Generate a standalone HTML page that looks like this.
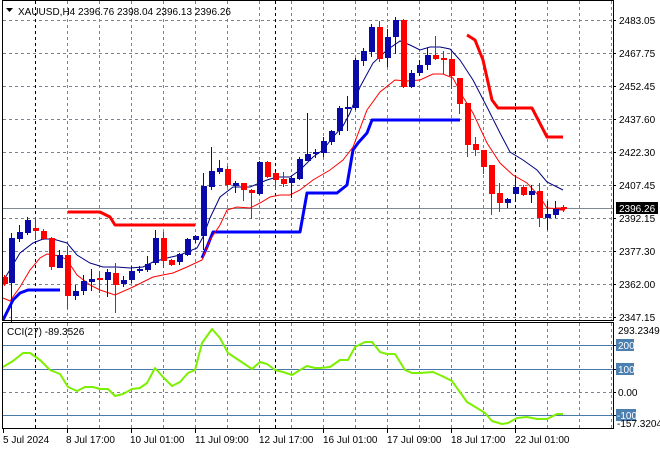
<!DOCTYPE html>
<html><head><meta charset="utf-8"><style>
html,body{margin:0;padding:0;background:#fff;}
svg{display:block;font-family:"Liberation Sans",sans-serif;font-size:10px;}
</style></head><body>
<svg width="660" height="450" viewBox="0 0 660 450" xmlns="http://www.w3.org/2000/svg">
<rect width="660" height="450" fill="#fff"/>
<!-- grid main -->
<g stroke="#7a8290" stroke-width="1" stroke-dasharray="3,3" fill="none">
<path d="M3 20.5H613M3 53.5H613M3 86.5H613M3 119.5H613M3 152.5H613M3 185.5H613M3 218.5H613M3 251.5H613M3 284.5H613M3 317.5H613"/>
<path d="M67.5 1V320M99.5 1V320M131.5 1V320M163.5 1V320M195.5 1V320M227.5 1V320M259.5 1V320M291.5 1V320M323.5 1V320M355.5 1V320M387.5 1V320M419.5 1V320M451.5 1V320M483.5 1V320M547.5 1V320M579.5 1V320M611.5 1V320"/>
<path d="M3 392.5H613"/>
<path d="M67.5 323V429M99.5 323V429M131.5 323V429M163.5 323V429M195.5 323V429M227.5 323V429M259.5 323V429M291.5 323V429M323.5 323V429M355.5 323V429M387.5 323V429M419.5 323V429M451.5 323V429M483.5 323V429M547.5 323V429M579.5 323V429M611.5 323V429"/>
</g>
<g stroke="#000" stroke-width="1" stroke-dasharray="3,3">
<path d="M35.5 1V320M275.5 1V320M515.5 1V320M35.5 323V429M275.5 323V429M515.5 323V429"/>
</g>
<!-- current price line -->
<path d="M3 208.5H613" stroke="#808890" stroke-width="1"/>
<!-- CCI levels -->
<path d="M3 345.5H613M3 369.5H613M3 415.5H613" stroke="#4a78a8" stroke-width="1"/>

<!-- thick step lines -->
<g fill="none" stroke-width="3" stroke-linejoin="round">
<polyline stroke="#ff0000" points="68,212 100,212 110,217 115,225 195,225"/>
<polyline stroke="#ff0000" points="467,35 475,40 483,60 492,100 498,108 532,108 547,137 563,137"/>
<polyline stroke="#ff0000" points="555,209 565,209"/>
<polyline stroke="#0000ff" points="3,320 13,300 20,293 28,290 60,290"/>
<polyline stroke="#0000ff" points="202,258 207,247 213,232 300,232 307,193 337,193 347,185 353,150 358,143 367,133 372,120 460,120"/>
</g>
<!-- MAs -->
<polyline fill="none" stroke="#000080" stroke-width="1" points="5,278 20,253 33,243 43,239 53,239 67,243 77,255 90,263 103,267 117,267 130,268 143,267 153,262 167,258 180,255 197,248 203,237 210,218 220,197 233,187 250,187 267,180 277,177 290,177 300,170 313,157 323,150 333,137 343,126 350,113 360,87 373,63 387,50 400,41 410,45 420,50 430,47 440,47 450,49 460,60 473,80 487,107 500,133 510,152 523,160 537,170 547,182 563,190"/>
<polyline fill="none" stroke="#ff0000" stroke-width="1" points="3,298 10,301 20,287 30,270 40,258 47,254 60,256 67,260 77,275 90,285 100,290 115,295 133,287 153,277 173,273 187,267 202,260 210,240 220,225 227,210 237,207 250,208 260,203 270,197 280,195 290,195 300,190 313,180 330,170 343,160 353,147 367,110 380,92 395,80 407,81 420,80 433,74 443,74 453,78 463,97 473,113 487,143 500,163 513,175 527,183 540,197 547,208 563,209"/>

<!-- blue candles -->
<g stroke="#0000c8" stroke-width="1">
<path d="M11.5 233V322M19.5 225V242M27.5 217V235M59.5 250V268M75.5 285V300M83.5 275V295M91.5 269V291M107.5 269V297M123.5 276V287M131.5 266V283M139.5 266V273M147.5 256V272M155.5 230V265M179.5 253V265M187.5 238V256M195.5 235V243M203.5 173V250M211.5 147V190M219.5 160V174M235.5 181V193M259.5 161V195M291.5 176V198M299.5 157V180M307.5 113V160M315.5 149V158M323.5 137V157M331.5 130V145M339.5 106V135M347.5 96V131M355.5 58V110M363.5 48V66M371.5 24V57M387.5 29V67M395.5 17V54M411.5 70V88M419.5 60V76M427.5 48V70M507.5 198V208M515.5 175V200M531.5 185V203M547.5 201V230M555.5 201V218"/>
</g>
<g fill="#0a0aa8">
<rect x="9" y="238" width="6" height="45"/><rect x="17" y="232" width="6" height="7"/><rect x="25" y="220" width="6" height="13"/><rect x="57" y="255" width="6" height="13"/><rect x="73" y="291" width="6" height="5"/><rect x="81" y="281" width="6" height="10"/><rect x="89" y="279" width="6" height="3"/><rect x="105" y="272" width="6" height="8"/><rect x="121" y="280" width="6" height="4"/><rect x="129" y="271" width="6" height="9"/><rect x="137" y="269" width="6" height="2"/><rect x="145" y="264" width="6" height="6"/><rect x="153" y="238" width="6" height="25"/><rect x="177" y="254" width="6" height="8"/><rect x="185" y="239" width="6" height="16"/><rect x="193" y="236" width="6" height="4"/><rect x="201" y="186" width="6" height="50"/><rect x="209" y="171" width="6" height="16"/><rect x="217" y="168" width="6" height="4"/><rect x="233" y="183" width="6" height="3"/><rect x="257" y="162" width="6" height="32"/><rect x="289" y="178" width="6" height="5"/><rect x="297" y="159" width="6" height="20"/><rect x="305" y="154" width="6" height="7"/><rect x="313" y="152" width="6" height="2"/><rect x="321" y="141" width="6" height="12"/><rect x="329" y="131" width="6" height="11"/><rect x="337" y="108" width="6" height="23"/><rect x="345" y="107" width="6" height="2"/><rect x="353" y="60" width="6" height="48"/><rect x="361" y="51" width="6" height="10"/><rect x="369" y="27" width="6" height="25"/><rect x="385" y="37" width="6" height="21"/><rect x="393" y="20" width="6" height="17"/><rect x="409" y="73" width="6" height="14"/><rect x="417" y="65" width="6" height="8"/><rect x="425" y="55" width="6" height="10"/><rect x="505" y="199" width="6" height="4"/><rect x="513" y="187" width="6" height="7"/><rect x="529" y="191" width="6" height="4"/><rect x="545" y="214" width="6" height="4"/><rect x="553" y="209" width="6" height="6"/>
</g>
<!-- red candles -->
<g stroke="#ff0000" stroke-width="1">
<path d="M4.5 275V286M35.5 217V240M43.5 229V240M51.5 237V270M67.5 246V309M99.5 271V293M115.5 263V313M163.5 232V268M171.5 259V266M227.5 166V187M243.5 183V201M251.5 189V219M267.5 161V178M275.5 172V190M283.5 172V187M379.5 21V62M403.5 19V88M435.5 36V60M443.5 51V74M451.5 51V89M459.5 78V114M467.5 103V157M475.5 137V156M483.5 150V174M491.5 165V215M499.5 183V212M523.5 185V196M539.5 183V227M563.5 205V212"/>
</g>
<g fill="#ff0000">
<rect x="2" y="277" width="6" height="7"/><rect x="33" y="228" width="6" height="3"/><rect x="41" y="231" width="6" height="8"/><rect x="49" y="238" width="6" height="29"/><rect x="65" y="255" width="6" height="41"/><rect x="97" y="278" width="6" height="2"/><rect x="113" y="273" width="6" height="12"/><rect x="161" y="238" width="6" height="23"/><rect x="169" y="260" width="6" height="5"/><rect x="225" y="169" width="6" height="16"/><rect x="241" y="183" width="6" height="7"/><rect x="249" y="190" width="6" height="3"/><rect x="265" y="162" width="6" height="15"/><rect x="273" y="173" width="6" height="7"/><rect x="281" y="179" width="6" height="5"/><rect x="377" y="27" width="6" height="32"/><rect x="401" y="20" width="6" height="67"/><rect x="433" y="55" width="6" height="4"/><rect x="441" y="58" width="6" height="2"/><rect x="449" y="59" width="6" height="17"/><rect x="457" y="78" width="6" height="26"/><rect x="465" y="103" width="6" height="42"/><rect x="473" y="144" width="6" height="6"/><rect x="481" y="150" width="6" height="17"/><rect x="489" y="165" width="6" height="29"/><rect x="497" y="193" width="6" height="10"/><rect x="521" y="187" width="6" height="8"/><rect x="537" y="191" width="6" height="27"/><rect x="561" y="207" width="6" height="2"/>
</g>

<!-- CCI line -->
<polyline fill="none" stroke="#7cf000" stroke-width="2" stroke-linejoin="round" points="3,367 13,361 23,353 30,353 40,360 50,370 60,374 68,387 77,391 85,387 93,387 100,389 108,389 115,396 123,394 132,389 140,388 147,383 155,368 163,377 172,386 180,382 188,373 195,370 202,343 212,329 220,338 228,353 240,361 252,369 260,362 267,364 275,370 283,372 292,375 300,370 307,366 315,368 320,368 330,367 340,360 348,360 355,347 365,342 372,342 380,352 387,354 395,354 405,370 412,373 420,373 433,372 442,376 452,381 467,402 477,408 485,413 492,421 502,424 508,423 517,418 527,417 537,419 547,419 557,414 563,414"/>

<!-- frames -->
<rect x="2.5" y="0.5" width="611" height="320" fill="none" stroke="#000"/>
<rect x="2.5" y="322.5" width="611" height="106" fill="none" stroke="#000"/>
<!-- right axis ticks -->
<g stroke="#000"><path d="M613 20.5h3M613 53.5h3M613 86.5h3M613 119.5h3M613 152.5h3M613 185.5h3M613 218.5h3M613 251.5h3M613 284.5h3M613 317.5h3M613 345.5h3M613 369.5h3M613 392.5h3M613 415.5h3"/>
<path d="M3.5 429v4M67.5 429v4M131.5 429v4M195.5 429v4M259.5 429v4M323.5 429v4M387.5 429v4M451.5 429v4M515.5 429v4"/></g>

<!-- price labels -->
<g fill="#000">
<text x="619" y="24">2483.05</text><text x="619" y="57">2467.75</text><text x="619" y="90">2452.45</text><text x="619" y="123">2437.60</text><text x="619" y="156">2422.30</text><text x="619" y="189">2407.45</text><text x="619" y="222">2392.15</text><text x="619" y="255">2377.30</text><text x="619" y="288">2362.00</text><text x="619" y="321">2347.15</text>
</g>
<rect x="616" y="202" width="42" height="12" fill="#000"/>
<text x="619" y="212" fill="#fff">2396.26</text>
<!-- CCI labels -->
<text x="618" y="334" fill="#000">293.2349</text>
<rect x="616" y="339" width="18" height="12" fill="#4a7fb0"/><text x="618" y="349" fill="#fff">200</text>
<rect x="616" y="363" width="18" height="12" fill="#4a7fb0"/><text x="618" y="373" fill="#fff">100</text>
<text x="618" y="396" fill="#000">0.00</text>
<rect x="616" y="409" width="20" height="12" fill="#4a7fb0"/><text x="617" y="419" fill="#fff">-100</text>
<text x="617" y="427" fill="#000">-157.3204</text>

<!-- title -->
<path d="M6 8h7l-3.5 4z" fill="#000"/>
<text x="18" y="15" fill="#000">XAUUSD,H4  2396.76 2398.04 2396.13 2396.26</text>
<text x="7" y="335" fill="#000">CCI(27) -89.3526</text>

<!-- dates -->
<g fill="#000">
<text x="3" y="443">5 Jul 2024</text><text x="66" y="443">8 Jul 17:00</text><text x="130" y="443">10 Jul 01:00</text><text x="195" y="443">11 Jul 09:00</text><text x="259" y="443">12 Jul 17:00</text><text x="323" y="443">16 Jul 01:00</text><text x="387" y="443">17 Jul 09:00</text><text x="451" y="443">18 Jul 17:00</text><text x="515" y="443">22 Jul 01:00</text>
</g>
</svg>
</body></html>
